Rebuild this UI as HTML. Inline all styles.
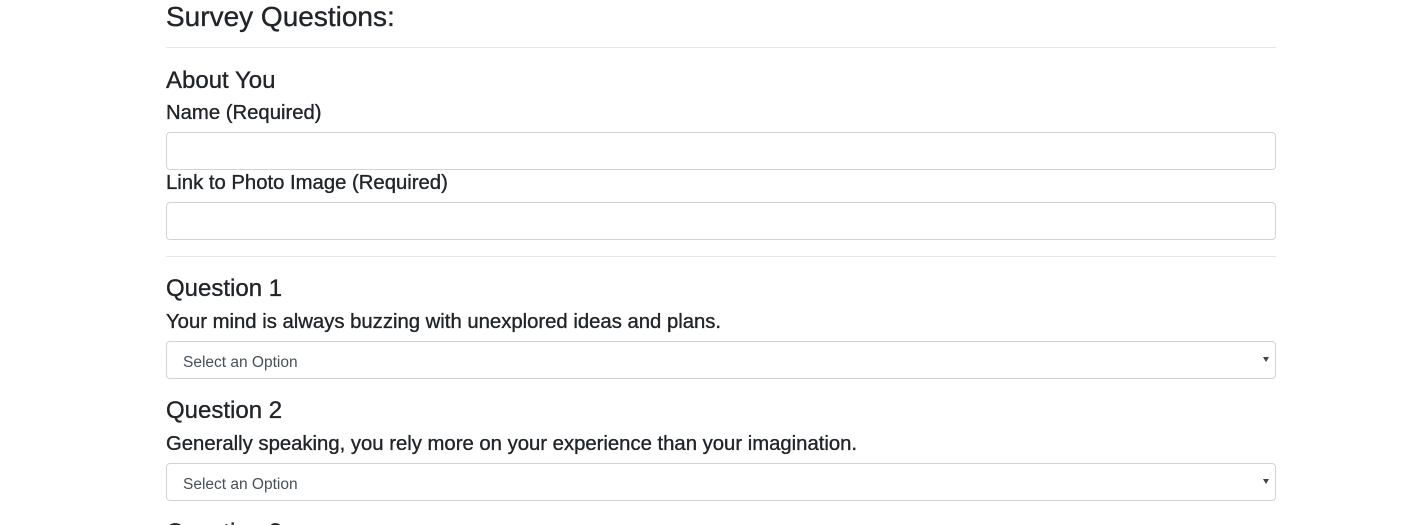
<!DOCTYPE html>
<html><head><meta charset="utf-8"><style>
html,body{margin:0;width:1406px;height:525px;overflow:hidden}
body{background:#fff;font-family:"Liberation Sans",sans-serif;color:#212529;position:relative}
.t{position:absolute;left:166px;white-space:nowrap;line-height:1;-webkit-text-stroke:0.35px #212529}
.h1{font-size:28px}
.h2{font-size:24px}
.l{font-size:20.3px}
.hr{position:absolute;left:166px;width:1110px;height:1px;background:#e6e6e6}
.in{position:absolute;left:166px;width:1108px;height:36px;border:1px solid #ced4da;border-radius:4px;background:#fff}
.sel{font-size:15.5px;color:#495057;line-height:36px;height:33px;padding-top:3px;padding-left:16px;width:1092px}
.sel:after{content:"";position:absolute;right:6px;top:15px;border-left:3px solid transparent;border-right:3px solid transparent;border-top:5px solid #444}
</style></head><body>
<div class="t h1" style="top:3px">Survey Questions:</div>
<div class="hr" style="top:47px"></div>
<div class="t h2" style="top:69px">About You</div>
<div class="t l" style="top:103px">Name (Required)</div>
<div class="in" style="top:132px"></div>
<div class="t l" style="top:173px">Link to Photo Image (Required)</div>
<div class="in" style="top:202px"></div>
<div class="hr" style="top:256px"></div>
<div class="t h2" style="top:277px">Question 1</div>
<div class="t l" style="top:312px">Your mind is always buzzing with unexplored ideas and plans.</div>
<div class="in sel" style="top:341px">Select an Option</div>
<div class="t h2" style="top:399px">Question 2</div>
<div class="t l" style="top:434px">Generally speaking, you rely more on your experience than your imagination.</div>
<div class="in sel" style="top:463px">Select an Option</div>
<div class="t h2" style="top:521px">Question 3</div>
</body></html>
